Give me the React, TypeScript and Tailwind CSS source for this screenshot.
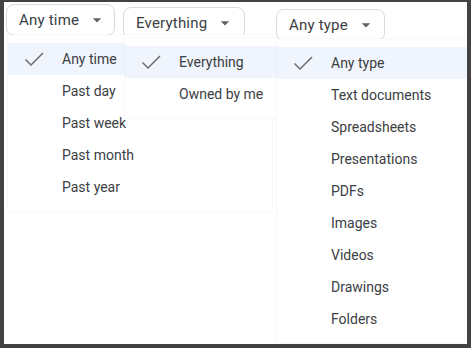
import React from 'react';

const Caret = () => (
  <svg width="20" height="20" viewBox="0 0 24 24" className="ml-[8px]">
    <path d="M7 10l5 5 5-5z" fill="#5f6368" />
  </svg>
);

const Check = () => (
  <svg width="24" height="24" viewBox="0 0 24 24">
    <path d="M3.5 12.5l5.5 5.5L21 6" fill="none" stroke="#6b6f73" strokeWidth="1.5" />
  </svg>
);

const Chip = ({ label, className }: { label: string; className: string }) => (
  <div
    className={`flex h-[32px] items-center whitespace-nowrap rounded-[8px] border border-[#dadce0] bg-white pl-[12px] text-[15px] tracking-[0.2px] text-[#3c4043] ${className}`}
  >
    {label}
    <Caret />
  </div>
);

const Menu = ({ items, className }: { items: string[]; className: string }) => (
  <div className={`absolute bg-white py-[8px] shadow-[0_0_1px_rgba(0,0,0,0.18)] ${className}`}>
    {items.map((item, i) => (
      <div
        key={item}
        className={`flex h-[32px] items-center whitespace-nowrap text-[14px] text-[#3c4043] ${i === 0 ? 'bg-[#f0f4fc]' : ''}`}
      >
        <div className="flex w-[54px] shrink-0 pl-[14px]">{i === 0 && <Check />}</div>
        {item}
      </div>
    ))}
  </div>
);

export default function App() {
  return (
    <div className="h-[348px] w-[471px] bg-[#424242] pb-[4px] pl-[4px] pr-[4px] pt-[2px]">
      <div className="relative h-full w-full overflow-hidden bg-white font-['Roboto',sans-serif]">
        <div className="flex items-start pl-[2px]">
          <Chip label="Any time" className="mt-[2px] w-[109px]" />
          <Chip label="Everything" className="ml-[8px] mt-[5px] w-[122px]" />
          <Chip label="Any type" className="ml-[31px] mt-[7px] w-[109px]" />
        </div>
        <Menu
          items={['Any time', 'Past day', 'Past week', 'Past month', 'Past year']}
          className="left-[4px] top-[33px] w-[264px]"
        />
        <Menu items={['Everything', 'Owned by me']} className="left-[121px] top-[36px] w-[152px]" />
        <Menu
          items={[
            'Any type',
            'Text documents',
            'Spreadsheets',
            'Presentations',
            'PDFs',
            'Images',
            'Videos',
            'Drawings',
            'Folders',
          ]}
          className="left-[273px] top-[37px] w-[220px]"
        />
      </div>
    </div>
  );
}
